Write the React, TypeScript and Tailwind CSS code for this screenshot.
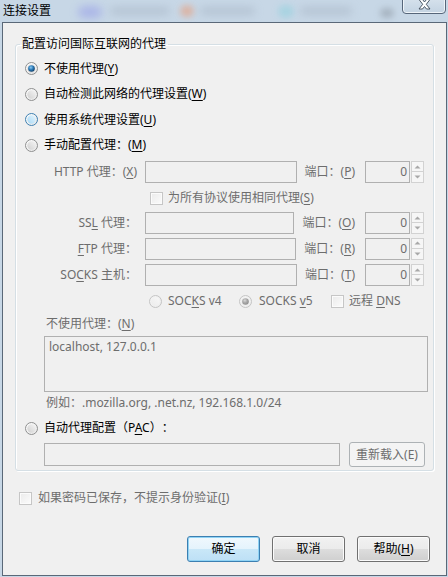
import React, { useId } from 'react';

type RState = 'checked' | 'unchecked' | 'hover' | 'disabled' | 'disabledChecked';

function Radio({ state }: { state: RState }) {
  const id = useId().replace(/:/g, '');
  const disabled = state === 'disabled' || state === 'disabledChecked';
  const hover = state === 'hover';
  const stroke = disabled ? '#c4c4c4' : hover ? '#3c7fb1' : '#8e8f8f';
  const f1 = disabled ? '#f7f7f7' : hover ? '#e6f5fd' : '#f4f4f4';
  const f2 = disabled ? '#ececec' : hover ? '#a7d8f5' : '#d0d0d0';
  return (
    <svg width="13" height="13" viewBox="0 0 13 13" className="shrink-0">
      <defs>
        <linearGradient id={`o${id}`} x1="0" y1="0" x2="1" y2="1">
          <stop offset="0" stopColor={disabled ? '#f4f4f4' : '#ffffff'} />
          <stop offset="1" stopColor={disabled ? '#ececec' : '#e4e4e4'} />
        </linearGradient>
        <linearGradient id={`i${id}`} x1="0" y1="1" x2="1" y2="0">
          <stop offset="0" stopColor={f2} />
          <stop offset="1" stopColor={f1} />
        </linearGradient>
        <radialGradient id={`d${id}`} cx="0.4" cy="0.35" r="0.7">
          <stop offset="0" stopColor={disabled ? '#d8d8d8' : '#8ccaf3'} />
          <stop offset="0.5" stopColor={disabled ? '#a8a8a8' : '#2a79b6'} />
          <stop offset="1" stopColor={disabled ? '#8c8c8c' : '#0e3a62'} />
        </radialGradient>
      </defs>
      <circle cx="6.5" cy="6.5" r="6" fill={`url(#o${id})`} stroke={stroke} strokeWidth="1" />
      <circle cx="6.5" cy="6.5" r="4.2" fill={`url(#i${id})`} />
      {(state === 'checked' || state === 'disabledChecked') && (
        <circle cx="6.5" cy="6.5" r="3.3" fill={`url(#d${id})`} />
      )}
    </svg>
  );
}

function Check() {
  return (
    <svg width="13" height="13" viewBox="0 0 13 13" className="shrink-0">
      <defs>
        <linearGradient id="chkg" x1="0" y1="0" x2="1" y2="1">
          <stop offset="0" stopColor="#ececec" />
          <stop offset="1" stopColor="#fafafa" />
        </linearGradient>
      </defs>
      <rect x="0.5" y="0.5" width="12" height="12" fill="#fbfbfb" stroke="#c6c6c6" />
      <rect x="2" y="2" width="9" height="9" fill="url(#chkg)" />
    </svg>
  );
}

function U({ c }: { c: string }) {
  return <span className="underline underline-offset-[2px] decoration-1">{c}</span>;
}

function Spinner() {
  const Arrow = ({ up }: { up: boolean }) => (
    <svg width="7" height="4" viewBox="0 0 7 4">
      {up ? <path d="M0.5 3.5 L3.5 0.5 L6.5 3.5 Z" fill="#a8a8a8" /> : <path d="M0.5 0.5 L3.5 3.5 L6.5 0.5 Z" fill="#a8a8a8" />}
    </svg>
  );
  return (
    <div className="flex flex-col w-[13px] h-[22px] ml-[1px]">
      <div className="h-[11px] border border-[#d2d2d2] bg-[#f6f6f6] flex items-center justify-center">
        <Arrow up />
      </div>
      <div className="h-[11px] border border-t-0 border-[#d2d2d2] bg-[#f6f6f6] flex items-center justify-center">
        <Arrow up={false} />
      </div>
    </div>
  );
}

function ProxyRow({
  label,
  inputW,
  port,
  rowH,
}: {
  label: React.ReactNode;
  inputW: string;
  port: React.ReactNode;
  rowH: string;
}) {
  return (
    <div className={`flex items-center pl-[28px] w-[408px] ${rowH}`}>
      <div className="w-[93px] text-right text-[#6d6d6d] whitespace-nowrap">{label}</div>
      <div className={`ml-[8px] h-[22px] border border-[#b0b0b0] bg-[#f0f0f0] ${inputW}`} />
      <div className="flex-1 text-right text-[#6d6d6d] whitespace-nowrap">{port}</div>
      <div className="ml-[10px] flex items-center">
        <div className="w-[45px] h-[22px] border border-[#b0b0b0] bg-[#f0f0f0] text-right pr-[2px] text-[#6d6d6d] leading-[20px]">
          0
        </div>
        <Spinner />
      </div>
    </div>
  );
}

function Btn({ children, focused }: { children: React.ReactNode; focused?: boolean }) {
  return (
    <div
      className={`w-[73px] h-[26px] rounded-[3px] border flex items-center justify-center text-black ${
        focused
          ? 'border-[#3c7fb1] shadow-[inset_0_0_0_1px_#8fd3f5] bg-[linear-gradient(#f0f8fd_0%,#e4f3fc_50%,#c9e7f8_51%,#bde0f6_100%)]'
          : 'border-[#707070] shadow-[inset_0_0_0_1px_#fbfbfb] bg-[linear-gradient(#f2f2f2_0%,#ebebeb_50%,#dddddd_51%,#cfcfcf_100%)]'
      }`}
    >
      {children}
    </div>
  );
}

export default function App() {
  return (
    <div className="w-[448px] h-[577px] relative overflow-hidden bg-[#c7d7e6] font-['Noto_Sans','Noto_Sans_CJK_SC',sans-serif] text-[12px] leading-[16px] text-black flex flex-col [text-spacing-trim:space-all]">
      {/* title bar glass blurs */}
      <div className="absolute left-[78px] top-[6px] w-[24px] h-[12px] rounded-full bg-[#9fa8e8] blur-[4px] opacity-70" />
      <div className="absolute left-[110px] top-[7px] w-[60px] h-[8px] rounded-full bg-[#a8b6c6] blur-[4px] opacity-60" />
      <div className="absolute left-[180px] top-[5px] w-[14px] h-[12px] rounded-full bg-[#e3a78c] blur-[3px] opacity-70" />
      <div className="absolute left-[200px] top-[7px] w-[55px] h-[8px] rounded-full bg-[#a8b6c6] blur-[4px] opacity-60" />
      <div className="absolute left-[278px] top-[5px] w-[16px] h-[13px] rounded-full bg-[#9dd2e0] blur-[3px] opacity-70" />
      <div className="absolute left-[300px] top-[7px] w-[52px] h-[8px] rounded-full bg-[#a8b6c6] blur-[4px] opacity-60" />
      <div className="absolute left-[380px] top-[8px] w-[14px] h-[10px] rounded-full bg-[#9aa6b2] blur-[3px] opacity-70" />

      {/* title */}
      <div className="relative h-[22px] shrink-0 flex items-center pl-[3px] text-black">连接设置</div>

      {/* close button */}
      <div className="absolute left-[402px] top-[-5px] w-[44px] h-[19px] rounded-b-[4px] border border-[#56667a] bg-[linear-gradient(#d9e4ee,#c3d3e2)] shadow-[inset_0_0_0_1px_#eef4f9] flex items-end justify-center pb-[3px]">
        <svg width="13" height="11" viewBox="0 0 13 11">
          <path
            d="M1 0.5 L4.5 0.5 L6.5 3 L8.5 0.5 L12 0.5 L8.3 5.3 L12 10 L8.5 10 L6.5 7.5 L4.5 10 L1 10 L4.7 5.3 Z"
            fill="#ffffff"
            stroke="#3d4a58"
            strokeWidth="0.9"
          />
        </svg>
      </div>

      {/* window body */}
      <div className="relative ml-[2px] mr-[1px] mb-[1px] flex-1 border border-[#5a6878] bg-[#f0f0f0] flex flex-col">
        <fieldset className="ml-[12px] mt-[13px] w-[419px] border border-[#d5dfe5] rounded-[3px] pb-[3px] shadow-[inset_1px_1px_0_#ffffff,1px_1px_0_#ffffff]">
          <legend className="ml-[4px] px-[2px] leading-[16px]">配置访问国际互联网的代理</legend>
          <div className="pt-[4px] flex flex-col">
            <div className="flex items-center h-[25px] pl-[9px]">
              <Radio state="checked" />
              <span className="ml-[6px]">
                不使用代理(<U c="Y" />)
              </span>
            </div>
            <div className="flex items-center h-[26px] pl-[9px]">
              <Radio state="unchecked" />
              <span className="ml-[6px]">
                自动检测此网络的代理设置(<U c="W" />)
              </span>
            </div>
            <div className="flex items-center h-[25px] pl-[9px]">
              <Radio state="hover" />
              <span className="ml-[6px]">
                使用系统代理设置(<U c="U" />)
              </span>
            </div>
            <div className="flex items-center h-[26px] pl-[9px]">
              <Radio state="unchecked" />
              <span className="ml-[6px]">
                手动配置代理：(<U c="M" />)
              </span>
            </div>

            <ProxyRow
              rowH="h-[28px]"
              inputW="w-[152px]"
              label={
                <>
                  HTTP 代理：(<U c="X" />)
                </>
              }
              port={
                <>
                  端口：(<U c="P" />)
                </>
              }
            />
            <div className="flex items-center h-[24px] pl-[134px]">
              <Check />
              <span className="ml-[5px] text-[#6d6d6d]">
                为所有协议使用相同代理(<U c="S" />)
              </span>
            </div>
            <ProxyRow
              rowH="h-[26px]"
              inputW="w-[149px]"
              label={
                <>
                  SS<U c="L" /> 代理：
                </>
              }
              port={
                <>
                  端口：(<U c="O" />)
                </>
              }
            />
            <ProxyRow
              rowH="h-[25px]"
              inputW="w-[151px]"
              label={
                <>
                  <U c="F" />TP 代理：
                </>
              }
              port={
                <>
                  端口：(<U c="R" />)
                </>
              }
            />
            <ProxyRow
              rowH="h-[28px]"
              inputW="w-[152px]"
              label={
                <>
                  SO<U c="C" />KS 主机：
                </>
              }
              port={
                <>
                  端口：(<U c="T" />)
                </>
              }
            />
            <div className="flex items-center h-[24px] pl-[133px] text-[#6d6d6d]">
              <Radio state="disabled" />
              <span className="ml-[6px] w-[71px] whitespace-nowrap">
                SOC<U c="K" />S v4
              </span>
              <Radio state="disabledChecked" />
              <span className="ml-[7px] w-[72px] whitespace-nowrap">
                SOCKS <U c="v" />5
              </span>
              <Check />
              <span className="ml-[5px] whitespace-nowrap">
                远程 <U c="D" />NS
              </span>
            </div>
            <div className="flex items-center h-[22px] pl-[30px] text-[#6d6d6d]">
              <span>
                不使用代理：(<U c="N" />)
              </span>
            </div>
            <div className="ml-[28px] mt-[1px] w-[384px] h-[56px] border border-[#b0b0b0] bg-[#f0f0f0] px-[4px] pt-[2px] text-[#6d6d6d]">
              localhost, 127.0.0.1
            </div>
            <div className="flex items-center h-[22px] pl-[30px] text-[#6d6d6d]">
              例如：.mozilla.org, .net.nz, 192.168.1.0/24
            </div>
            <div className="flex items-center h-[28px] pl-[9px]">
              <Radio state="unchecked" />
              <span className="ml-[6px]">
                自动代理配置（P<U c="A" />C）：
              </span>
            </div>
            <div className="flex items-center h-[25px] pl-[28px]">
              <div className="w-[296px] h-[23px] border border-[#b0b0b0] bg-[#f0f0f0]" />
              <div className="ml-[9px] w-[76px] h-[25px] rounded-[3px] border border-[#adb2b5] bg-[#f4f4f4] flex items-center justify-center text-[#6d6d6d]">
                重新载入(E)
              </div>
            </div>
          </div>
        </fieldset>

        <div className="mt-[16px] h-[22px] flex items-center pl-[16px]">
          <Check />
          <span className="ml-[6px] text-[#6d6d6d]">
            如果密码已保存，不提示身份验证(<U c="I" />)
          </span>
        </div>

        <div className="mt-[27px] flex justify-end pr-[16px] gap-[12px]">
          <Btn focused>确定</Btn>
          <Btn>取消</Btn>
          <Btn>
            帮助(<U c="H" />)
          </Btn>
        </div>
      </div>
    </div>
  );
}
